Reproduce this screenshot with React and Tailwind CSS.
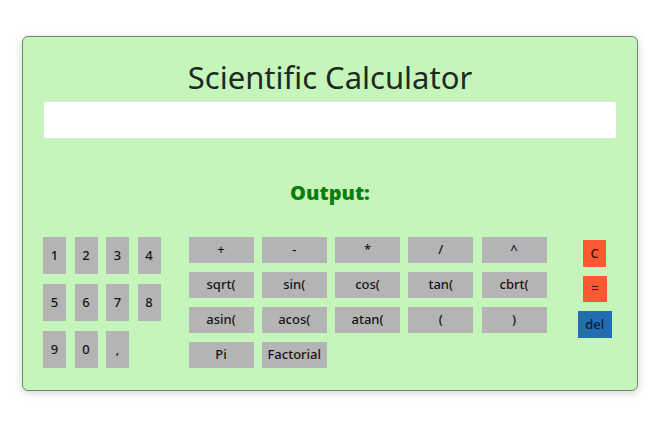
import React, { useState } from 'react';

const numbers = ['1', '2', '3', '4', '5', '6', '7', '8', '9', '0', ','];
const operators = [
  '+', '-', '*', '/', '^',
  'sqrt(', 'sin(', 'cos(', 'tan(', 'cbrt(',
  'asin(', 'acos(', 'atan(', '(', ')',
  'Pi', 'Factorial',
];

const font = { fontFamily: '"Segoe UI", "Noto Sans", "Open Sans", sans-serif' };

export default function App() {
  const [expr, setExpr] = useState('');

  const press = (v) => setExpr((e) => e + v);

  return (
    <div className="bg-white min-h-screen pt-[36px]" style={font}>
      <div className="mx-[22px] w-[616px] bg-[#c6f5bc] border border-[#6f8a6a] rounded-md shadow-[0_2px_8px_rgba(0,0,0,0.18)] px-5 pt-[20px] pb-[22px]">
        <h1 className="text-center text-[31px] leading-[40px] text-[#1c2a22] font-normal">
          Scientific Calculator
        </h1>

        <input
          value={expr}
          onChange={(e) => setExpr(e.target.value)}
          className="mt-[4px] block w-full h-[38px] bg-white rounded-[3px] border border-[#dde8da] outline-none px-2 text-[15px]"
        />

        <div className="h-[98px] flex items-center justify-center pt-[10px]">
          <span className="text-[#0b7d0b] text-[20px] font-black" style={{ fontFamily: '"Noto Sans", sans-serif' }}>
            Output:
          </span>
        </div>

        <div className="flex items-start">
          <div className="grid grid-cols-[repeat(4,23px)] gap-x-[8.5px] gap-y-[10px]">
            {numbers.map((n) => (
              <button
                key={n}
                onClick={() => press(n)}
                className="h-[37px] w-[23px] bg-[#b4b4b4] text-[13px] font-medium text-[#141414] flex items-center justify-center"
              >
                {n}
              </button>
            ))}
          </div>

          <div className="ml-[28px] grid grid-cols-[repeat(5,65px)] gap-x-[8.25px] gap-y-[9px]">
            {operators.map((op) => (
              <button
                key={op}
                onClick={() => press(op)}
                className="h-[26px] w-[65px] bg-[#b4b4b4] text-[13px] font-medium text-[#141414] flex items-center justify-center"
              >
                {op}
              </button>
            ))}
          </div>

          <div className="flex-1 flex flex-col items-center pt-[3px] gap-[9px] pl-[26px]">
            <button onClick={() => setExpr('')} className="w-[23px] h-[27px] bg-[#fd5834] text-[13px] font-medium text-[#3a1208]">
              C
            </button>
            <button className="w-[24px] h-[26px] bg-[#fd5834] text-[13px] font-medium text-[#3a1208]">
              =
            </button>
            <button onClick={() => setExpr((e) => e.slice(0, -1))} className="w-[34px] h-[27px] bg-[#226cb0] text-[13px] font-medium text-[#0d1b30]">
              del
            </button>
          </div>
        </div>
      </div>
    </div>
  );
}
